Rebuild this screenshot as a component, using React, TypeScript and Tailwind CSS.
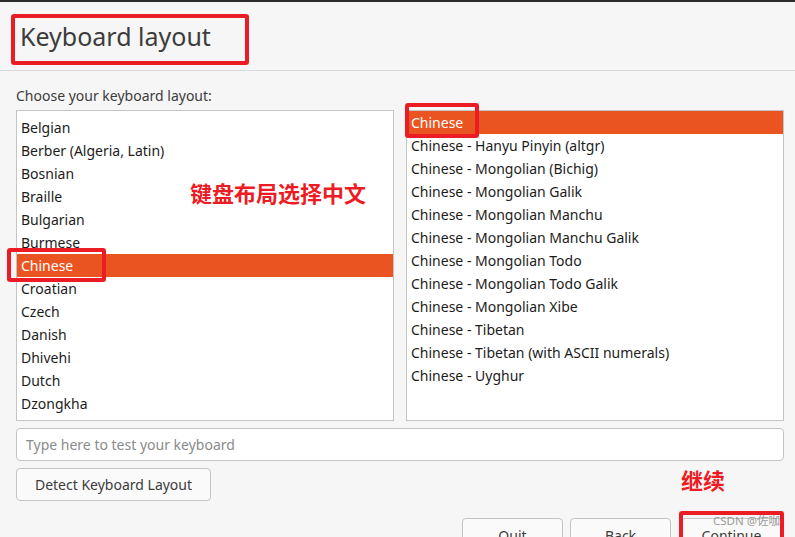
import React from "react";

const leftItems = [
  "Belgian",
  "Berber (Algeria, Latin)",
  "Bosnian",
  "Braille",
  "Bulgarian",
  "Burmese",
  "Chinese",
  "Croatian",
  "Czech",
  "Danish",
  "Dhivehi",
  "Dutch",
  "Dzongkha",
  "English (Australian)",
];

const rightItems = [
  "Chinese",
  "Chinese - Hanyu Pinyin (altgr)",
  "Chinese - Mongolian (Bichig)",
  "Chinese - Mongolian Galik",
  "Chinese - Mongolian Manchu",
  "Chinese - Mongolian Manchu Galik",
  "Chinese - Mongolian Todo",
  "Chinese - Mongolian Todo Galik",
  "Chinese - Mongolian Xibe",
  "Chinese - Tibetan",
  "Chinese - Tibetan (with ASCII numerals)",
  "Chinese - Uyghur",
];

function Row({ text, selected }: { text: string; selected: boolean }) {
  return (
    <div
      className={
        selected
          ? "h-[23px] shrink-0 flex items-center pl-[4px] bg-[#e95420] text-white"
          : "h-[23px] shrink-0 flex items-center pl-[4px] text-[#1c1c1c]"
      }
    >
      {text}
    </div>
  );
}

export default function App() {
  return (
    <div
      className="relative w-[795px] h-[537px] overflow-hidden bg-[#f6f6f6] text-[#3c3c3c]"
      style={{ fontFamily: '"Noto Sans", "Noto Sans CJK SC", sans-serif' }}
    >
      <div className="h-[2px] bg-[#2c2c2c]" />
      <div className="h-[69px] border-b border-[#dadada] flex items-start pl-[20px] pt-[16px]">
        <h1 className="text-[25px] leading-[36px] text-[#3c3c3c] font-normal">Keyboard layout</h1>
      </div>
      <div className="pl-[16px] pr-[11px]">
        <div className="h-[39px] pt-[15px] text-[14px] leading-[20px] text-[#3c3c3c]">
          Choose your keyboard layout:
        </div>
        <div className="flex gap-[12px] h-[311px]">
          <div className="w-[378px] h-full border border-[#c4c4c4] bg-white overflow-hidden flex flex-col pt-[5px] text-[14px]">
            {leftItems.map((t) => (
              <Row key={t} text={t} selected={t === "Chinese"} />
            ))}
          </div>
          <div className="w-[378px] h-full border border-[#c4c4c4] bg-white overflow-hidden flex flex-col text-[14px]">
            {rightItems.map((t, i) => (
              <Row key={t} text={t} selected={i === 0} />
            ))}
          </div>
        </div>
        <div className="mt-[7px] h-[33px] border border-[#c4c4c4] rounded-[4px] bg-white flex items-center pl-[9px] text-[14px] text-[#8b8b8b]">
          Type here to test your keyboard
        </div>
        <div className="mt-[7px] flex">
          <button className="h-[33px] w-[195px] border border-[#c4c4c4] rounded-[4px] bg-[#fafafa] text-[14px] text-[#3c3c3c] flex items-center justify-center">
            Detect Keyboard Layout
          </button>
        </div>
        <div className="mt-[17px] flex justify-end gap-[7px] pr-[2px]">
          <button className="h-[33px] w-[101px] border border-[#c4c4c4] rounded-[4px] bg-[#fafafa] text-[14px] text-[#3c3c3c] flex items-center justify-center pt-[2px]">
            Quit
          </button>
          <button className="h-[33px] w-[101px] border border-[#c4c4c4] rounded-[4px] bg-[#fafafa] text-[14px] text-[#3c3c3c] flex items-center justify-center pt-[2px]">
            Back
          </button>
          <button className="h-[33px] w-[101px] ml-[3px] border border-[#c4c4c4] rounded-[4px] bg-[#fafafa] text-[14px] text-[#3c3c3c] flex items-center justify-center pt-[2px]">
            Continue
          </button>
        </div>
      </div>

      {/* annotations */}
      <div className="absolute left-[11px] top-[14px] w-[238px] h-[51px] border-[4px] border-[#ec1c24] rounded-[3px]" />
      <div className="absolute left-[7px] top-[248px] w-[99px] h-[34px] border-[4px] border-[#ec1c24] rounded-[3px]" />
      <div className="absolute left-[405px] top-[103px] w-[74px] h-[35px] border-[4px] border-[#ec1c24] rounded-[3px]" />
      <div className="absolute left-[679px] top-[511px] w-[105px] h-[40px] border-[4px] border-[#ec1c24] rounded-[3px]" />
      <div className="absolute left-[190px] top-[178px] text-[22px] leading-[30px] font-bold text-[#ec1c24]">
        键盘布局选择中文
      </div>
      <div className="absolute left-[681px] top-[465px] text-[22px] leading-[30px] font-bold text-[#ec1c24]">
        继续
      </div>
      <div className="absolute left-[713px] top-[513px] text-[11.5px] leading-[16px] text-[#9a9a9a]">
        CSDN @佐咖
      </div>
    </div>
  );
}
